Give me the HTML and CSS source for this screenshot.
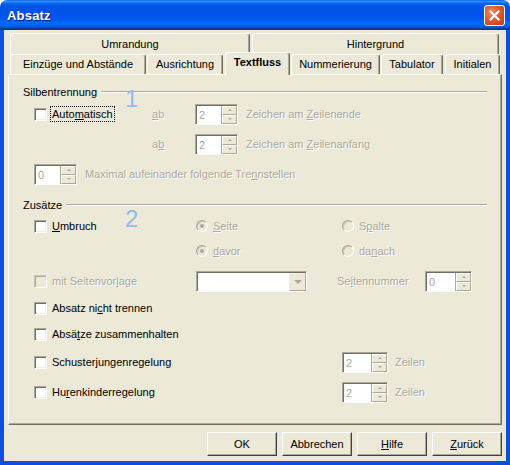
FILE: index.html
```html
<!DOCTYPE html>
<html lang="de">
<head>
<meta charset="utf-8">
<title>Absatz</title>
<link rel="stylesheet" href="styles.css">
</head>
<body>
<div class="window">
  <div class="titlebar">
    <span class="title">Absatz</span>
    <span class="close"><svg width="11" height="11" viewBox="0 0 11 11"><path d="M1.5 1.5 L9.5 9.5 M9.5 1.5 L1.5 9.5" stroke="#fff" stroke-width="2.2" stroke-linecap="square" fill="none"/></svg></span>
  </div>
  <div class="client">
    <div class="tabs">
      <div class="tabrow back">
        <div class="tab t-umr">Umrandung</div>
        <div class="tab t-hin">Hintergrund</div>
      </div>
      <div class="tabrow front">
        <div class="tab t-ein">Einzüge und Abstände</div>
        <div class="tab t-aus">Ausrichtung</div>
        <div class="tab t-txt sel">Textfluss</div>
        <div class="tab t-num">Nummerierung</div>
        <div class="tab t-tab">Tabulator</div>
        <div class="tab t-ini">Initialen</div>
      </div>
    </div>
    <div class="panel">
      <div class="hdr h1"><span>Silbentrennung</span><span class="line"></span></div>
      <div class="row ra">
        <div class="cell c118"><span class="cb"></span><span class="lbl focus">Auto<u>m</u>atisch</span></div>
        <div class="cell c43 dis"><u>a</u>b</div>
        <div class="spin w43"><span class="val">2</span><span class="btns"><i class="up"></i><i class="dn"></i></span></div>
        <span class="txt dis ml8">Zeichen am <u>Z</u>eilenende</span>
      </div>
      <div class="row rb">
        <div class="cell c118"></div>
        <div class="cell c43 dis">a<u>b</u></div>
        <div class="spin w43"><span class="val">2</span><span class="btns"><i class="up"></i><i class="dn"></i></span></div>
        <span class="txt dis ml8">Zeichen am <u>Z</u>eilenanfang</span>
      </div>
      <div class="row rc">
        <div class="spin w43"><span class="val">0</span><span class="btns"><i class="up"></i><i class="dn"></i></span></div>
        <span class="txt dis ml8">Maximal aufeinander folgende Tre<u>n</u>nstellen</span>
      </div>
      <div class="hdr h2"><span>Zusätze</span><span class="line"></span></div>
      <div class="row rd">
        <div class="cell c162"><span class="cb"></span><span class="lbl"><u>U</u>mbruch</span></div>
        <div class="cell c146"><span class="radio on"></span><span class="lbl dis"><u>S</u>eite</span></div>
        <div class="cell"><span class="radio"></span><span class="lbl dis">S<u>p</u>alte</span></div>
      </div>
      <div class="row re">
        <div class="cell c162"></div>
        <div class="cell c146"><span class="radio on"></span><span class="lbl dis"><u>d</u>avor</span></div>
        <div class="cell"><span class="radio"></span><span class="lbl dis">da<u>n</u>ach</span></div>
      </div>
      <div class="row rf">
        <div class="cell c162"><span class="cb off"></span><span class="lbl dis">mit Seitenvor<u>l</u>age</span></div>
        <div class="combo"><span class="drop"></span></div>
        <span class="txt dis ml30 c88">Se<u>i</u>tennummer</span>
        <div class="spin w47"><span class="val">0</span><span class="btns"><i class="up"></i><i class="dn"></i></span></div>
      </div>
      <div class="row rg">
        <div class="cell"><span class="cb"></span><span class="lbl">Absatz ni<u>c</u>ht trennen</span></div>
      </div>
      <div class="row rh">
        <div class="cell"><span class="cb"></span><span class="lbl">Absä<u>t</u>ze zusammenhalten</span></div>
      </div>
      <div class="row ri">
        <div class="cell c308"><span class="cb"></span><span class="lbl">Schuster<u>j</u>ungenregelung</span></div>
        <div class="spin w46"><span class="val">2</span><span class="btns"><i class="up"></i><i class="dn"></i></span></div>
        <span class="txt dis ml7">Zeilen</span>
      </div>
      <div class="row rj">
        <div class="cell c308"><span class="cb"></span><span class="lbl">Hu<u>r</u>enkinderregelung</span></div>
        <div class="spin w46"><span class="val">2</span><span class="btns"><i class="up"></i><i class="dn"></i></span></div>
        <span class="txt dis ml7">Zeilen</span>
      </div>
      <span class="marker m1">1</span>
      <span class="marker m2">2</span>
    </div>
    <div class="btnrow">
      <button class="btn">OK</button>
      <button class="btn">Abbrechen</button>
      <button class="btn"><u>H</u>ilfe</button>
      <button class="btn"><u>Z</u>urück</button>
    </div>
  </div>
</div>
</body>
</html>
```
FILE: styles.css
```css
* { box-sizing: border-box; }
html, body { margin: 0; padding: 0; }
body {
  width: 510px; height: 465px; overflow: hidden; background: #fff;
  font-family: "Liberation Sans", Arial, sans-serif; font-size: 11px; color: #000;
}
.window { width: 510px; height: 465px; display: flex; flex-direction: column; }

.titlebar {
  height: 30px; flex: none; display: flex; align-items: center; justify-content: space-between;
  padding: 0 5px 0 7px; border-radius: 7px 7px 0 0;
  background: linear-gradient(to bottom, #0058ee 0%, #3593ff 4%, #288eff 6%, #127dff 8%, #036ffc 10%, #0262ee 14%, #0057e5 20%, #0054e3 24%, #0055eb 56%, #005bf5 66%, #026afe 76%, #0062ef 86%, #0052d6 92%, #0040ab 94%, #003092 100%);
}
.title { color: #fff; font-weight: bold; font-size: 13px; text-shadow: 1px 1px #0f1a89; letter-spacing: 0.2px; }
.close {
  width: 21px; height: 21px; border: 1px solid #fff; border-radius: 3px;
  display: flex; align-items: center; justify-content: center;
  background: radial-gradient(circle at 35% 35%, #f08a64 0%, #e25a30 45%, #d4461b 75%, #c23c14 100%);
}

.client {
  flex: 1; background: #ECE9D8; display: flex; flex-direction: column;
  border: 4px solid #0b4fe0; border-top: 0;
}

.tabs { padding: 3px 0 0 6px; }
.tabrow { display: flex; }
.tabrow.back { height: 21px; }
.tabrow.front { height: 20px; align-items: flex-end; }
.tab {
  height: 100%; background: #ECE9D8; flex: none;
  border-top: 1px solid #fff; border-left: 1px solid #fff; border-right: 1px solid #716F64;
  box-shadow: inset -1px 0 #ACA899; border-radius: 3px 3px 0 0;
  display: flex; justify-content: center; line-height: 13px; padding-top: 3px;
}
.back .tab { padding-top: 4px; }
.t-umr { width: 240px; margin-right: 2px; }
.t-hin { width: 247px; }
.t-ein { width: 136px; margin-right: 1px; }
.t-aus { width: 76px; margin-right: 2px; }
.t-txt { width: 65px; margin-right: 1px; }
.t-num { width: 89px; margin-right: 1px; }
.t-tab { width: 62px; margin-right: 2px; }
.t-ini { width: 55px; }
.tab.sel {
  height: 23px; margin-bottom: -1px; font-weight: bold; position: relative; z-index: 2;
  padding-top: 3px;
}

.panel {
  position: relative; margin-left: 4px; width: 494px; height: 351px; flex: none;
  border: 1px solid; border-color: #fff #716F64 #716F64 #fff;
  box-shadow: inset -1px -1px #ACA899;
  display: flex; flex-direction: column;
}

.hdr { display: flex; align-items: center; height: 16px; padding: 0 14px; flex: none; line-height: 13px; }
.hdr .line { flex: 1; height: 2px; border-top: 1px solid #ACA899; border-bottom: 1px solid #fff; margin-left: 4px; }
.h1 { margin-top: 9px; }
.h2 { margin-top: 12px; }

.row { display: flex; align-items: center; height: 22px; padding-left: 25px; flex: none; line-height: 13px; }
.ra { margin-top: 3px; }
.rb { margin-top: 8px; }
.rc { margin-top: 8px; }
.rd { margin-top: 2px; }
.re { margin-top: 3px; }
.rf { margin-top: 8px; }
.rg { margin-top: 5px; }
.rh { margin-top: 4px; }
.ri { margin-top: 6px; }
.rj { margin-top: 8px; }

.cell { display: flex; align-items: center; flex: none; }
.c43 { width: 43px; }
.c88 { width: 88px; flex: none; }
.c118 { width: 118px; }
.c146 { width: 146px; }
.c162 { width: 162px; }
.c308 { width: 308px; }
.ml7 { margin-left: 7px; }
.ml8 { margin-left: 8px; }
.ml30 { margin-left: 30px; }
.txt { white-space: nowrap; }

.dis { color: #ACA899; text-shadow: 1px 1px #fff; }

.cb {
  width: 13px; height: 13px; flex: none; background: #fff;
  border: 1px solid; border-color: #ACA899 #fff #fff #ACA899;
  box-shadow: inset 1px 1px #716F64, inset -1px -1px #F1EFE2;
}
.cb.off { background: #ECE9D8; border-color: #CBC7B8 #fff #fff #CBC7B8; box-shadow: inset 1px 1px #ACA899; }

.lbl { margin-left: 3px; border: 1px solid transparent; padding: 0 1px; white-space: nowrap; }
.lbl.focus { border: 1px dotted #000; padding: 1px 1px 0; }

.radio {
  width: 12px; height: 12px; flex: none; border-radius: 50%;
  border: 1px solid; border-color: #ACA899 #fff #fff #ACA899;
  background: #ECE9D8; box-shadow: inset 1px 1px #C8C4B4;
  display: flex; align-items: center; justify-content: center;
}
.radio.on::after { content: ""; width: 4px; height: 4px; border-radius: 50%; background: #ACA899; }

.spin {
  display: flex; height: 21px; flex: none; background: #fff;
  border: 1px solid; border-color: #ACA899 #fff #fff #ACA899;
  box-shadow: inset 1px 1px #716F64;
  padding: 1px 0 0 1px;
}
.w43 { width: 43px; }
.w46 { width: 46px; }
.w47 { width: 47px; }
.spin .val { flex: 1; padding-left: 2px; line-height: 18px; color: #ACA899; }
.spin .btns { width: 16px; display: flex; flex-direction: column; border-left: 1px solid #ACA899; }
.spin .btns i {
  flex: 1; background: #ECE9D8; border: 1px solid; border-color: #fff #ACA899 #ACA899 #fff;
  display: flex; align-items: center; justify-content: center;
}
.spin .btns i::before { content: ""; border-left: 2px solid transparent; border-right: 2px solid transparent; }
.spin .btns i.up::before { border-bottom: 2px solid #ACA899; }
.spin .btns i.dn::before { border-top: 2px solid #ACA899; }

.combo {
  width: 111px; height: 21px; flex: none; display: flex; background: #fff;
  border: 1px solid; border-color: #ACA899 #fff #fff #ACA899;
  box-shadow: inset 1px 1px #716F64;
  padding: 1px 0 0 1px;
}
.combo .drop {
  margin-left: auto; width: 17px; background: #ECE9D8;
  border: 1px solid; border-color: #F1EFE2 #ACA899 #ACA899 #F1EFE2;
  display: flex; align-items: center; justify-content: center;
}
.combo .drop::before { content: ""; border-left: 4px solid transparent; border-right: 4px solid transparent; border-top: 4px solid #ACA899; }

.marker { position: absolute; color: #94B9EE; font-size: 24px; line-height: 1; }
.m1 { left: 116px; top: 12px; }
.m2 { left: 116px; top: 132px; }

.btnrow { display: flex; justify-content: flex-end; gap: 5px; padding-right: 4px; margin-top: 7px; }
.btn {
  width: 70px; height: 24px; padding: 0; background: #ECE9D8; color: #000;
  font-family: inherit; font-size: 11px;
  border: 1px solid; border-color: #fff #404040 #404040 #fff;
  box-shadow: inset -1px -1px #ACA899;
  display: flex; align-items: center; justify-content: center;
}
```
